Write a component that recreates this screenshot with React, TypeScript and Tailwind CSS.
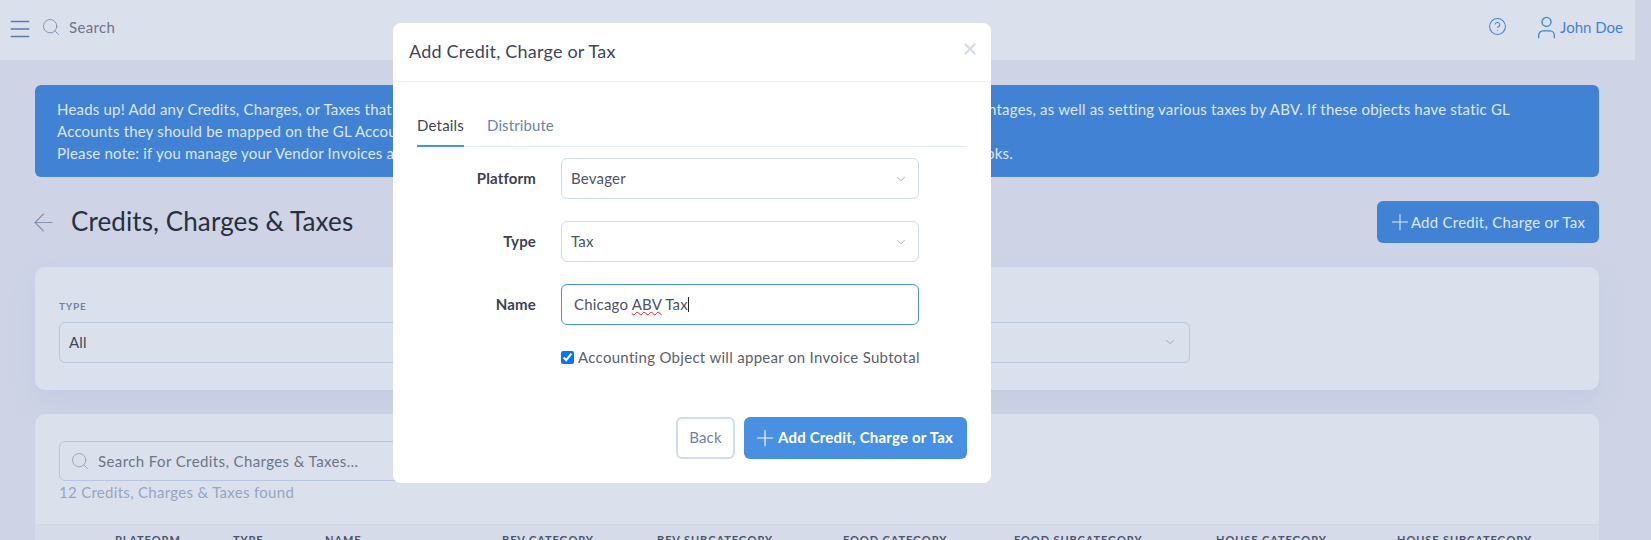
import React from 'react';
import { ArrowLeft, ChevronDown, CircleHelp, Menu, Plus, Search, User, X } from 'lucide-react';

const COLUMNS = [
  { label: 'PLATFORM', width: 'w-[118px]' },
  { label: 'TYPE', width: 'w-[92px]' },
  { label: 'NAME', width: 'w-[177px]' },
  { label: 'BEV CATEGORY', width: 'w-[155px]' },
  { label: 'BEV SUBCATEGORY', width: 'w-[186px]' },
  { label: 'FOOD CATEGORY', width: 'w-[171px]' },
  { label: 'FOOD SUBCATEGORY', width: 'w-[202px]' },
  { label: 'HOUSE CATEGORY', width: 'w-[181px]' },
  { label: 'HOUSE SUBCATEGORY', width: 'w-auto' },
];

function ModalSelect({ label, value }: { label: string; value: string }) {
  return (
    <div className="flex items-center">
      <span className="mb-[1px] w-[119px] text-right text-[15px] font-bold tracking-[0.15px] text-[#3b4350]">{label}</span>
      <div className="ml-[25px] flex h-[41px] w-[358px] items-center justify-between rounded-[6px] border border-[#d2ddec] pl-[9px] pr-[10px] text-[15px] text-[#4d5561]">
        <span>{value}</span>
        <ChevronDown size={14} strokeWidth={1} className="text-[#6e84a3]" />
      </div>
    </div>
  );
}

function AddModal() {
  return (
    <div className="absolute left-[393px] top-[23px] flex h-[460px] w-[598px] flex-col rounded-[8px] bg-white">
      <div className="flex h-[59px] items-center justify-between border-b border-[#edf2f9] pl-[16px] pr-[12px]">
        <h2 className="mb-[2px] text-[18px] tracking-[0.2px] text-[#3f4754]">Add Credit, Charge or Tax</h2>
        <X size={18} strokeWidth={3} className="mb-[6px] text-[#d5dce6]" />
      </div>
      <div className="flex flex-1 flex-col px-[24px]">
        <div className="mt-[29px] flex h-[36px] gap-[23px] border-b border-[#e3ebf6] pt-[3px] text-[15px]">
          <span className="-mb-px border-b-2 border-[#4a90e2] text-[#3f4754]">Details</span>
          <span className="tracking-[0.1px] text-[#6e84a3]">Distribute</span>
        </div>
        <div className="mt-[11px] flex flex-col gap-[22px]">
          <ModalSelect label="Platform" value="Bevager" />
          <ModalSelect label="Type" value="Tax" />
          <div className="flex items-center">
            <span className="mb-[1px] w-[119px] text-right text-[15px] font-bold tracking-[0.15px] text-[#3b4350]">Name</span>
            <div className="ml-[25px] flex h-[41px] w-[358px] items-center rounded-[6px] border border-[#4a90e2] pl-[12px] text-[15px] text-[#4d5561]">
              <span>
                Chicago <span className="underline decoration-wavy decoration-[#e02020] decoration-1">ABV</span> Tax
              </span>
              <span className="h-[15px] w-px bg-[#222]" />
            </div>
          </div>
        </div>
        <label className="ml-[144px] mt-[21px] flex items-center gap-[4px] whitespace-nowrap text-[15px] tracking-[0.3px] text-[#5a626e]">
          <input type="checkbox" checked readOnly className="m-0 h-[13px] w-[13px]" />
          Accounting Object will appear on Invoice Subtotal
        </label>
        <div className="mt-[48px] flex justify-end gap-[9px]">
          <button className="h-[42px] w-[59px] rounded-[6px] border-2 border-[#d2ddec] text-[15px] text-[#6e84a3]">Back</button>
          <button className="flex h-[42px] w-[223px] items-center justify-center gap-[2px] rounded-[6px] bg-[#4a90e2] pr-[2px] text-[15px] font-bold text-white">
            <Plus size={26} strokeWidth={1} className="-mx-[4px]" />
            <span className="ml-[2px]">Add Credit, Charge or Tax</span>
          </button>
        </div>
      </div>
    </div>
  );
}

export default function App() {
  return (
    <div className="relative h-[540px] w-[1651px] overflow-hidden bg-[#ced4e6] font-['Lato',sans-serif] tracking-[0.2px]">
      {/* Top bar */}
      <div className="flex h-[60px] w-[1635px] items-center bg-[#dbe1ec] pb-[6px] pl-[7px] pr-[12px]">
        <Menu size={26} strokeWidth={1.4} className="mt-[3px] text-[#5f7aa5]" />
        <Search size={20} strokeWidth={1.1} className="ml-[8px] text-[#7d8fae]" />
        <span className="ml-[8px] text-[15px] tracking-[0.35px] text-[#6b7688]">Search</span>
        <CircleHelp size={19} strokeWidth={1.3} className="mb-[2px] ml-auto text-[#4282d5]" />
        <User size={27} strokeWidth={1.2} className="ml-[26px] text-[#4282d5]" />
        <span className="text-[15px] tracking-normal text-[#4282d5]">John Doe</span>
      </div>

      <div className="w-[1599px] pl-[35px]">
        {/* Alert */}
        <div className="mt-[25px] h-[92px] rounded-[6px] bg-[#4282d5] py-[13px] pl-[22px] text-[15px] leading-[22px] text-[#dce7f6]">
          <div className="flex justify-between whitespace-nowrap pr-[89px]">
            <span>Heads up! Add any Credits, Charges, or Taxes that apply</span>
            <span>to discounts or percentages, as well as setting various taxes by ABV. If these objects have static GL</span>
          </div>
          <div className="whitespace-nowrap">Accounts they should be mapped on the GL Accounts page.</div>
          <div className="flex justify-between whitespace-nowrap pr-[586px]">
            <span>Please note: if you manage your Vendor Invoices and</span>
            <span>sync them, map these objects in your books.</span>
          </div>
        </div>

        {/* Title row */}
        <div className="mt-[24px] flex h-[42px] items-center justify-between">
          <div className="flex items-center">
            <ArrowLeft size={29} strokeWidth={1} className="-ml-[6px] text-[#8496b5]" />
            <h1 className="mb-[2px] ml-[13px] text-[26px] tracking-[0.1px] text-[#27303f]">Credits, Charges &amp; Taxes</h1>
          </div>
          <button className="flex h-[42px] w-[222px] items-center justify-center rounded-[6px] bg-[#4282d5] text-[15px] tracking-[0.25px] text-[#dce7f6]">
            <Plus size={26} strokeWidth={1} className="-mx-[4px]" />
            <span className="ml-[2px]">Add Credit, Charge or Tax</span>
          </button>
        </div>

        {/* Filters */}
        <div className="mt-[24px] h-[123px] rounded-[10px] bg-[#dbe1ec] px-[24px] pt-[32px] shadow-[0_12px_24px_rgba(170,182,210,0.25)]">
          <div className="text-[10px] font-bold tracking-[0.8px] text-[#6f83a6]">TYPE</div>
          <div className="mt-[8px] flex h-[41px] w-[1131px] items-center justify-between rounded-[6px] border border-[#b8c6df] pb-[1px] pl-[9px] pr-[12px] text-[15px] text-[#3f4754]">
            <span>All</span>
            <ChevronDown size={14} strokeWidth={1} className="text-[#6e84a3]" />
          </div>
        </div>

        {/* Table card */}
        <div className="mt-[24px] h-[200px] rounded-t-[10px] bg-[#dbe1ec]">
          <div className="px-[24px] pt-[27px]">
            <div className="flex h-[40px] w-[700px] items-center rounded-[6px] border border-[#b8c6df] pl-[10px] text-[15px] tracking-[0.4px] text-[#6b7688]">
              <Search size={20} strokeWidth={1.1} className="text-[#8fa2c0]" />
              <span className="ml-[8px]">Search For Credits, Charges &amp; Taxes…</span>
            </div>
            <div className="text-[15px] tracking-[0.3px] text-[#95a5c4]">12 Credits, Charges &amp; Taxes found</div>
          </div>
          <div className="mt-[20px] flex h-[40px] border-t border-[#d0d7e7] bg-[#d5dbe8] pl-[80px] pt-[7px] text-[11px] font-bold tracking-[0.9px] text-[#4a5670]">
            {COLUMNS.map((col) => (
              <span key={col.label} className={`${col.width} whitespace-nowrap`}>{col.label}</span>
            ))}
          </div>
        </div>
      </div>

      <AddModal />
    </div>
  );
}
